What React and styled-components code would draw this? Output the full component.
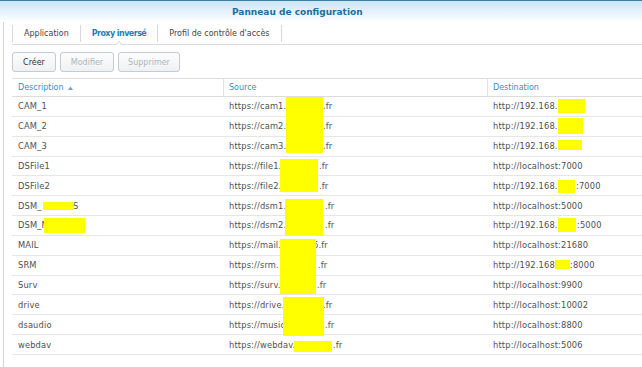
import React from "react";
import styled, { createGlobalStyle } from "styled-components";

const Global = createGlobalStyle`
  html, body { margin: 0; padding: 0; background: #fff; }
  body { font-family: "DejaVu Sans", Verdana, sans-serif; }
  * { box-sizing: border-box; }
`;

const Page = styled.div`
  position: relative;
  width: 642px;
  height: 367px;
  overflow: hidden;
  background: #fff;
  display: flex;
  flex-direction: column;
`;

const TitleBar = styled.div`
  height: 22px;
  flex: none;
  border-top: 1px solid #3f7fa6;
  background: linear-gradient(to bottom, #cbe4f5 0%, #e3f1fa 45%, #ffffff 100%);
  display: flex;
  align-items: center;
  padding-left: 232px;
`;

const Title = styled.span`
  font-size: 9px;
  font-weight: bold;
  color: #1f6d9d;
  white-space: nowrap;
`;

const Body = styled.div`
  flex: 1;
  margin-left: 3px;
  border-left: 1px solid #d3d3d3;
  padding-left: 8px;
  display: flex;
  flex-direction: column;
`;

const TabBar = styled.div`
  height: 23px;
  flex: none;
  display: flex;
  border-bottom: 1px solid #dcdcdc;
`;

const Tab = styled.div`
  position: relative;
  height: 22px;
  display: flex;
  align-items: center;
  padding: 0 11px;
  margin-right: 1px;
  font-size: 8px;
  white-space: nowrap;
  color: ${(p) => (p.$active ? "#2a7db4" : "#444")};
  font-weight: ${(p) => (p.$active ? "bold" : "normal")};
  letter-spacing: ${(p) => (p.$active ? "-0.55px" : "0")};
  &::after {
    content: "";
    position: absolute;
    right: -1px;
    top: 3px;
    height: 17px;
    width: 1px;
    background: #d8d8d8;
  }
  &:first-child {
    margin-left: 1px;
  }
  &:first-child::before {
    content: "";
    position: absolute;
    left: -1px;
    top: 3px;
    height: 17px;
    width: 1px;
    background: #d8d8d8;
  }
`;

const Notch = styled.span`
  position: absolute;
  left: 50%;
  bottom: -1px;
  transform: translateX(-50%);
  width: 0;
  height: 0;
  border-left: 4px solid transparent;
  border-right: 4px solid transparent;
  border-bottom: 4px solid #d0d0d0;
  &::after {
    content: "";
    position: absolute;
    left: -3px;
    top: 1px;
    border-left: 3px solid transparent;
    border-right: 3px solid transparent;
    border-bottom: 3px solid #fff;
  }
`;

const Toolbar = styled.div`
  flex: none;
  display: flex;
  gap: 4px;
  padding: 7px 0 6px;
`;

const Button = styled.button`
  width: ${(p) => p.$w}px;
  height: 20px;
  padding: 0;
  border: 1px solid #c4cbd2;
  border-radius: 3px;
  background: linear-gradient(to bottom, #fdfdfe, #eef1f4);
  font-family: "DejaVu Sans", Verdana, sans-serif;
  font-size: 8px;
  color: #333;
  &:disabled {
    color: #aeb3b8;
  }
`;

const Grid = styled.div`
  flex: none;
  border-top: 1px solid #dcdcdc;
`;

const HeaderRow = styled.div`
  display: grid;
  grid-template-columns: 212px 264px 1fr;
  height: 18px;
  border-bottom: 1px solid #dcdcdc;
`;

const HeaderCell = styled.div`
  display: flex;
  align-items: center;
  gap: 4px;
  padding-left: ${(p) => (p.$first ? 6 : 5)}px;
  font-size: 8px;
  color: #3a8cc4;
  white-space: nowrap;
  border-right: ${(p) => (p.$last ? "none" : "1px solid #e2e2e2")};
`;

const Row = styled.div`
  display: grid;
  grid-template-columns: 212px 264px 1fr;
  height: 19.85px;
  border-bottom: 1px solid #e6e6e6;
`;

const Cell = styled.div`
  display: flex;
  align-items: center;
  padding-left: ${(p) => (p.$first ? 6 : 5)}px;
  font-size: 8.3px;
  letter-spacing: 0.15px;
  color: #505050;
  white-space: nowrap;
  overflow: hidden;
`;

const Pre = styled.span`
  display: inline-block;
  width: ${(p) => p.$w}px;
  flex: none;
`;

const Redact = styled.div`
  position: absolute;
  background: #ffff00;
`;

const SortArrow = () => (
  <svg width="5" height="4" viewBox="0 0 5 4">
    <path d="M0 4 L2.5 0.5 L5 4 Z" fill="#6aa6d2" />
  </svg>
);

const rows = [
  { d: "CAM_1", s: ["https://cam1.", ".fr", 94], t: "http://192.168." },
  { d: "CAM_2", s: ["https://cam2.", ".fr", 94], t: "http://192.168." },
  { d: "CAM_3", s: ["https://cam3.", ".fr", 94], t: "http://192.168." },
  { d: "DSFile1", s: ["https://file1.", ".fr", 90], t: "http://localhost:7000" },
  { d: "DSFile2", s: ["https://file2.", ".fr", 90], t: ["http://192.168.", ":7000", 83] },
  { d: ["DSM_", "S", 55], s: ["https://dsm1.", ".fr", 96], t: "http://localhost:5000" },
  { d: "DSM_M", s: ["https://dsm2.", ".fr", 96], t: ["http://192.168.", ":5000", 84] },
  { d: "MAIL", s: ["https://mail.", "6.fr", 84], t: "http://localhost:21680" },
  { d: "SRM", s: ["https://srm.", ".fr", 89], t: ["http://192.168", ":8000", 77] },
  { d: "Surv", s: ["https://surv.", ".fr", 88], t: "http://localhost:9900" },
  { d: "drive", s: ["https://drive.", ".fr", 94], t: "http://localhost:10002" },
  { d: "dsaudio", s: ["https://music", ".fr", 96], t: "http://localhost:8800" },
  { d: "webdav", s: ["https://webdav.", ".fr", 104], t: "http://localhost:5006" },
];

const redactions = [
  [286, 97, 37, 56],
  [280, 159, 38, 33],
  [285, 199, 38, 36],
  [280, 239, 36, 55],
  [283, 297, 41, 39],
  [294, 341, 38, 11],
  [558, 99, 27, 14],
  [558, 118, 25, 16],
  [558, 140, 24, 10],
  [558, 180, 17, 13],
  [558, 218, 18, 14],
  [555, 260, 15, 9],
  [43, 202, 31, 8],
  [44, 218, 41, 15],
];

const Value = ({ v }) =>
  typeof v === "string" ? (
    v
  ) : (
    <>
      <Pre $w={v[2]}>{v[0]}</Pre>
      {v[1]}
    </>
  );

export default function App() {
  return (
    <>
      <Global />
      <Page>
        <TitleBar>
          <Title>Panneau de configuration</Title>
        </TitleBar>
        <Body>
          <TabBar>
            <Tab>Application</Tab>
            <Tab $active>
              Proxy inversé
              <Notch />
            </Tab>
            <Tab>Profil de contrôle d'accès</Tab>
          </TabBar>
          <Toolbar>
            <Button $w={44}>Créer</Button>
            <Button $w={54} disabled>
              Modifier
            </Button>
            <Button $w={62} disabled>
              Supprimer
            </Button>
          </Toolbar>
          <Grid>
            <HeaderRow>
              <HeaderCell $first>
                Description
                <SortArrow />
              </HeaderCell>
              <HeaderCell>Source</HeaderCell>
              <HeaderCell $last>Destination</HeaderCell>
            </HeaderRow>
            {rows.map((r, i) => (
              <Row key={i}>
                <Cell $first>
                  <Value v={r.d} />
                </Cell>
                <Cell>
                  <Value v={r.s} />
                </Cell>
                <Cell>
                  <Value v={r.t} />
                </Cell>
              </Row>
            ))}
          </Grid>
        </Body>
        {redactions.map(([x, y, w, h], i) => (
          <Redact key={i} style={{ left: x, top: y, width: w, height: h }} />
        ))}
      </Page>
    </>
  );
}
